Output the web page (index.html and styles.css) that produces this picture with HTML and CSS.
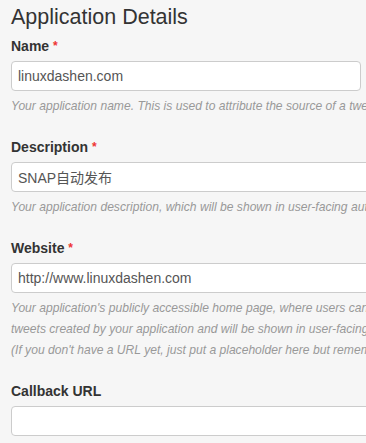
FILE: index.html
```html
<!DOCTYPE html>
<html lang="en">
<head>
    <meta charset="UTF-8">
    <meta name="viewport" content="width=device-width, initial-scale=1.0">
    <title>Application Details</title>
    <link rel="stylesheet" href="styles.css">
</head>
<body>
    <div class="details">
        <h2 class="title">Application Details</h2>

        <div class="field">
            <label class="label">Name <span class="req">*</span></label>
            <input class="input input-short" type="text" value="linuxdashen.com">
            <p class="help">Your application name. This is used to attribute the source of a tweet and in user-facing authorization screens. 32 characters max.</p>
        </div>

        <div class="field">
            <label class="label">Description <span class="req">*</span></label>
            <input class="input" type="text" value="SNAP自动发布">
            <p class="help">Your application description, which will be shown in user-facing authorization screens. Between 10 and 200 characters max.</p>
        </div>

        <div class="field">
            <label class="label">Website <span class="req">*</span></label>
            <input class="input" type="text" value="http://www.linuxdashen.com">
            <p class="help">Your application's publicly accessible home page, where users can go to download, make use of, or find out more information about your application. This fully-qualified URL is used in the source attribution for<br>tweets created by your application and will be shown in user-facing authorization screens.<br>(If you don't have a URL yet, just put a placeholder here but remember to change it later.)</p>
        </div>

        <div class="field">
            <label class="label">Callback URL</label>
            <input class="input" type="text" value="">
        </div>
    </div>
</body>
</html>
```

FILE: styles.css
```css
body, html {
    margin: 0;
    padding: 0;
    background: #f6f6f6;
    overflow: hidden;
    font-family: 'Liberation Sans', Arial, 'Noto Sans CJK SC', sans-serif;
    color: #333;
}
.details {
    width: 600px;
    padding-left: 11px;
}
.title {
    margin: 0;
    padding-top: 2px;
    height: 33px;
    font-size: 21.5px;
    font-weight: normal;
    line-height: 30px;
    color: #333;
}
.field {
    display: flex;
    flex-direction: column;
    align-items: flex-start;
}
.label {
    padding-top: 1px;
    font-size: 14px;
    font-weight: bold;
    line-height: 20px;
    margin-bottom: 5px;
}
.req {
    color: #e33;
    font-size: 12px;
    vertical-align: top;
}
.input {
    box-sizing: border-box;
    width: 420px;
    height: 30px;
    margin: 0;
    padding: 4px 6px;
    border: 1px solid #ccc;
    border-radius: 4px;
    background: #fff;
    font-family: 'Liberation Sans', Arial, 'Noto Sans CJK SC', sans-serif;
    font-size: 14px;
    color: #555;
}
.input-short {
    width: 350px;
}
.help {
    margin: 5px 0 19px;
    font-size: 12.1px;
    font-style: italic;
    line-height: 21px;
    color: #999;
    white-space: nowrap;
}
```
